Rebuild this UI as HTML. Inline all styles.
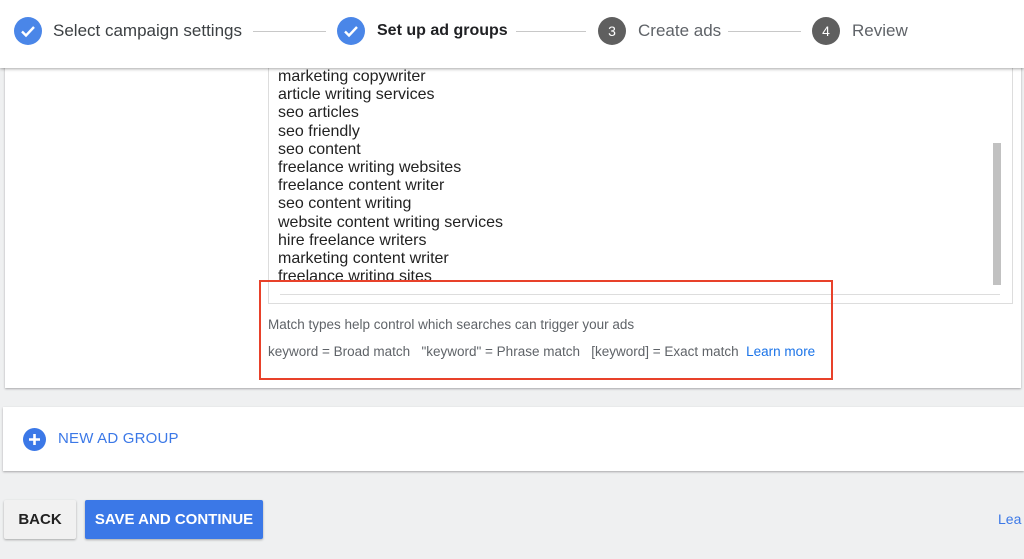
<!DOCTYPE html>
<html><head><meta charset="utf-8"><style>
*{margin:0;padding:0;box-sizing:border-box}
body{width:1024px;height:559px;overflow:hidden;background:#eff0f1;font-family:"Liberation Sans",Arial,sans-serif;position:relative}
.hdr{position:absolute;left:0;top:0;width:1024px;height:68px;background:#fff;box-shadow:0 1px 3px rgba(0,0,0,.35);z-index:5}
.ab{position:absolute}
.circ{position:absolute;width:28px;height:28px;border-radius:50%;top:17px}
.st{position:absolute;top:21px;font-size:17px;color:#3c4043;line-height:20px}
.ln{position:absolute;top:31px;height:1px;background:#c8c8c8}
.card{position:absolute;left:5px;top:60px;width:1016px;height:328px;background:#fff;box-shadow:0 1px 2px rgba(0,0,0,.3)}
.kw{position:absolute;left:278px;top:67px;font-size:16px;line-height:18.2px;color:#222}
.msg{position:absolute;font-size:13.5px;color:#5f6368}
</style></head><body>
<div class="hdr">
 <div class="circ" style="left:14px;background:#4a86e8"><svg width="28" height="28"><path d="M8 14.5l4 4 8-8.5" stroke="#fff" stroke-width="2.4" fill="none"/></svg></div>
 <div class="st" style="left:53px">Select campaign settings</div>
 <div class="ln" style="left:253px;width:73px"></div>
 <div class="circ" style="left:337px;background:#4a86e8"><svg width="28" height="28"><path d="M8 14.5l4 4 8-8.5" stroke="#fff" stroke-width="2.4" fill="none"/></svg></div>
 <div class="st" style="left:377px;font-weight:bold;color:#202124;font-size:16px">Set up ad groups</div>
 <div class="ln" style="left:516px;width:70px"></div>
 <div class="circ" style="left:598px;background:#5f5f5f;color:#fff;font-size:14px;text-align:center;line-height:28px">3</div>
 <div class="st" style="left:638px;color:#5f6368">Create ads</div>
 <div class="ln" style="left:728px;width:73px"></div>
 <div class="circ" style="left:812px;background:#5f5f5f;color:#fff;font-size:14px;text-align:center;line-height:28px">4</div>
 <div class="st" style="left:852px;color:#5f6368">Review</div>
</div>
<div class="card"></div>
<div class="ab" style="left:268px;top:60px;width:745px;height:244px;border:1px solid #ddd;border-top:none"></div>
<div class="kw" style="top:68px">marketing copywriter<br>article writing services<br>seo articles<br>seo friendly<br>seo content<br>freelance writing websites<br>freelance content writer<br>seo content writing<br>website content writing services<br>hire freelance writers<br>marketing content writer<br>freelance writing sites</div>
<div class="ab" style="left:269px;top:282px;width:724px;height:12px;background:#fff"></div>
<div class="ab" style="left:280px;top:294px;width:720px;height:1px;background:#ddd"></div>
<div class="ab" style="left:993px;top:143px;width:8px;height:142px;background:#c1c1c1"></div>
<div class="msg" style="left:268px;top:317px">Match types help control which searches can trigger your ads</div>
<div class="msg" style="left:268px;top:344px">keyword = Broad match &nbsp; "keyword" = Phrase match &nbsp; [keyword] = Exact match &nbsp;<span style="color:#1a73e8">Learn more</span></div>
<div class="ab" style="left:259px;top:280px;width:574px;height:100px;border:2px solid #e8412a"></div>
<div class="ab" style="left:3px;top:407px;width:1021px;height:64px;background:#fff;box-shadow:0 1px 2px rgba(0,0,0,.3)"></div>
<div class="ab" style="left:23px;top:428px;width:23px;height:23px;border-radius:50%;background:#3b78e7"><svg width="23" height="23"><path d="M11.5 6v11M6 11.5h11" stroke="#fff" stroke-width="2.6"/></svg></div>
<div class="ab" style="left:58px;top:430px;font-size:15px;color:#3b78e7;letter-spacing:.2px">NEW AD GROUP</div>
<div class="ab" style="left:4px;top:500px;width:72px;height:39px;background:#f1f1f1;box-shadow:0 1px 2px rgba(0,0,0,.3);border-radius:2px;font-size:15px;color:#222;text-align:center;line-height:39px;font-weight:bold">BACK</div>
<div class="ab" style="left:85px;top:500px;width:178px;height:39px;background:#3b78e7;box-shadow:0 1px 2px rgba(0,0,0,.3);border-radius:2px;font-size:15px;color:#fff;text-align:center;line-height:39px;font-weight:bold">SAVE AND CONTINUE</div>
<div class="ab" style="left:998px;top:511px;font-size:14px;color:#3b78e7">Lea</div>
</body></html>
